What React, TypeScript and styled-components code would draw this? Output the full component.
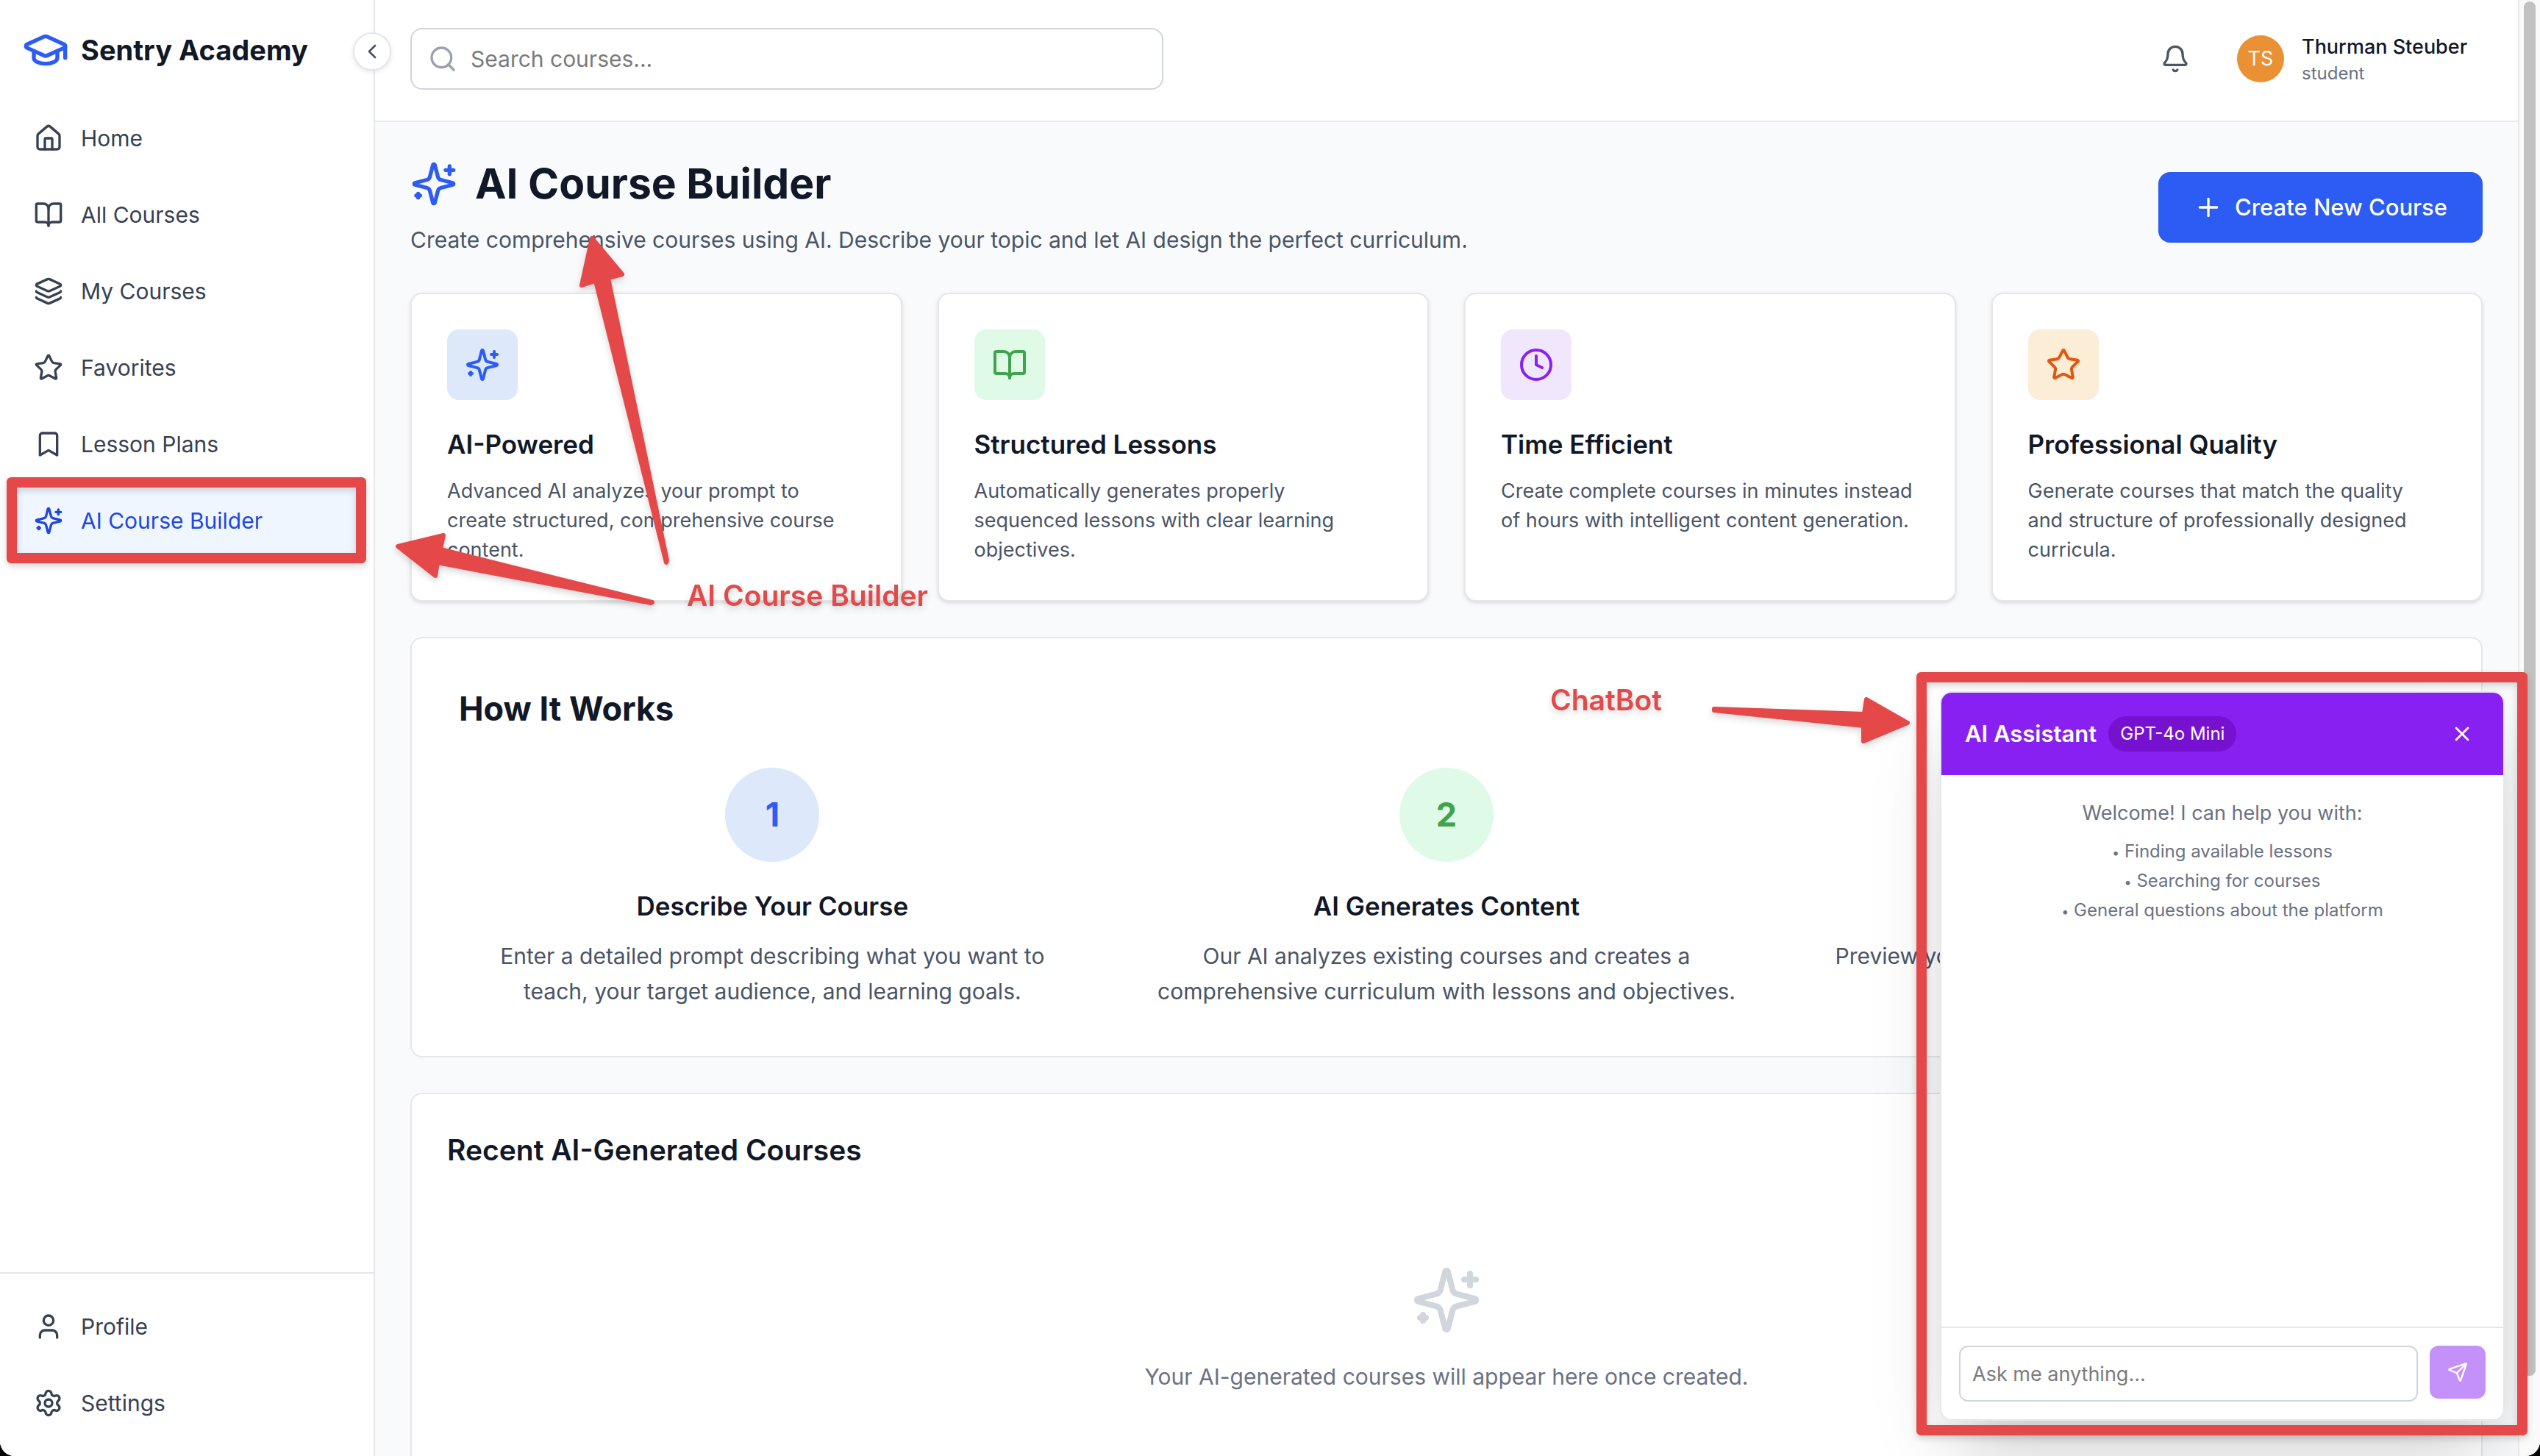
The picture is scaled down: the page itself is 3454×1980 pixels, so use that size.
import React from "react";
import styled, { createGlobalStyle } from "styled-components";
import {
  Bell,
  BookOpen,
  Bookmark,
  ChevronLeft,
  Clock,
  GraduationCap,
  House,
  Layers,
  Plus,
  Search,
  Send,
  Settings,
  Star,
  User,
  X,
} from "lucide-react";

const c = {
  ink: "#111827",
  nav: "#364153",
  text: "#4a5565",
  muted: "#6a7282",
  faint: "#99a1af",
  line: "#e5e7eb",
  field: "#d1d5dc",
  canvas: "#f9fafc",
  blue: "#2c5cf4",
  blueInk: "#2147e0",
  blueSoft: "#dde8fb",
  green: "#3fa44c",
  greenSoft: "#e0fae8",
  purple: "#8920f2",
  purpleInk: "#7511cf",
  purpleSoft: "#f1e7fd",
  orange: "#e3560e",
  orangeSoft: "#fcedd6",
  mark: "#e54849",
};

const GlobalStyle = createGlobalStyle`
  *, *::before, *::after { box-sizing: border-box; }
  body {
    margin: 0;
    background: #000;
    color: ${c.ink};
    font-family: Inter, "Liberation Sans", sans-serif;
    font-size: 30px;
    line-height: 48px;
  }
  h1, h2, h3, p, ul { margin: 0; padding: 0; }
  ul { list-style: none; }
  a { color: inherit; text-decoration: none; }
  button, input { font: inherit; color: inherit; border: 0; margin: 0; }
  button { cursor: pointer; }
  svg { flex: none; display: block; }
`;

/* ---------- shell ---------- */

const Shell = styled.div`
  position: relative;
  display: flex;
  height: 100vh;
  overflow: hidden;
  background: ${c.canvas};
  border-radius: 0 0 20px 20px;
`;

const Sidebar = styled.aside`
  position: relative;
  z-index: 2;
  flex: none;
  display: flex;
  flex-direction: column;
  width: 510px;
  background: #fff;
  border-right: 2px solid ${c.line};
`;

const Brand = styled.a`
  display: flex;
  align-items: center;
  gap: 16px;
  padding: 36px 30px 24px;
  font-size: 38px;
  font-weight: 700;
  line-height: 64px;
  svg { color: ${c.blue}; }
`;

const CollapseButton = styled.button`
  position: absolute;
  top: 44px;
  right: -24px;
  display: flex;
  padding: 8px;
  color: ${c.text};
  background: #fff;
  border: 2px solid ${c.line};
  border-radius: 50%;
  box-shadow: 0 2px 6px rgba(0, 0, 0, 0.1);
`;

const NavList = styled.nav<{ $footer?: boolean }>`
  display: flex;
  flex-direction: column;
  gap: 8px;
  padding: ${(p) => (p.$footer ? "24px 16px 24px 14px" : "16px 16px 16px 14px")};
  ${(p) => (p.$footer ? `margin-top: auto; border-top: 2px solid ${c.line};` : "")}
`;

const NavLink = styled.a<{ $active?: boolean }>`
  display: flex;
  align-items: center;
  gap: 24px;
  padding: 24px 32px;
  border-radius: 16px;
  color: ${(p) => (p.$active ? c.blueInk : c.nav)};
  background: ${(p) => (p.$active ? "#eff6ff" : "transparent")};
`;

const Main = styled.main`
  flex: 1;
  min-width: 0;
`;

const TopBar = styled.header`
  display: flex;
  align-items: center;
  justify-content: space-between;
  padding: 38px 64px 42px 48px;
  background: #fff;
  border-bottom: 2px solid ${c.line};
`;

const SearchBox = styled.label`
  display: flex;
  align-items: center;
  gap: 18px;
  width: 1024px;
  height: 84px;
  padding: 0 22px;
  border: 2px solid ${c.field};
  border-radius: 16px;
  color: ${c.faint};
`;

const TextInput = styled.input`
  flex: 1;
  min-width: 0;
  padding: 0;
  color: ${c.ink};
  background: transparent;
  outline: none;
  &::placeholder { color: #7b7b7b; opacity: 1; }
`;

const Account = styled.div`
  display: flex;
  align-items: center;
  gap: 48px;
`;

const IconButton = styled.button<{ $pad: number }>`
  display: flex;
  padding: ${(p) => p.$pad}px;
  color: inherit;
  background: transparent;
`;

const BellButton = styled(IconButton)`
  color: ${c.text};
`;

const UserButton = styled.button`
  display: flex;
  align-items: center;
  gap: 24px;
  padding: 0;
  text-align: left;
  background: transparent;
`;

const Avatar = styled.span`
  display: flex;
  align-items: center;
  justify-content: center;
  width: 64px;
  height: 64px;
  border-radius: 50%;
  background: #ea9134;
  color: #fff;
  font-size: 27px;
`;

const UserText = styled.span`
  display: flex;
  flex-direction: column;
  min-width: 230px;
`;

const UserName = styled.span`
  font-size: 27px;
  font-weight: 500;
  line-height: 40px;
`;

const UserRole = styled.span`
  font-size: 24px;
  line-height: 32px;
  color: ${c.muted};
`;

const Content = styled.div`
  display: flex;
  flex-direction: column;
  gap: 48px;
  padding: 48px;
`;

/* ---------- page heading ---------- */

const Heading = styled.section`
  display: flex;
  align-items: center;
  justify-content: space-between;
`;

const PageTitle = styled.h1`
  display: flex;
  align-items: center;
  gap: 24px;
  margin-bottom: 16px;
  font-size: 57px;
  font-weight: 700;
  line-height: 72px;
  svg { color: ${c.blue}; }
`;

const Subtitle = styled.p`
  color: ${c.text};
`;

const PrimaryButton = styled.button`
  display: flex;
  align-items: center;
  gap: 16px;
  padding: 24px 48px;
  border-radius: 16px;
  background: ${c.blue};
  color: #fff;
  font-size: 31px;
  font-weight: 500;
`;

/* ---------- feature cards ---------- */

const CardGrid = styled.section`
  display: grid;
  grid-template-columns: repeat(4, minmax(0, 1fr));
  gap: 48px;
`;

const Panel = styled.section<{ $pad: number }>`
  padding: ${(p) => p.$pad}px;
  background: #fff;
  border: 2px solid ${c.line};
  border-radius: 16px;
`;

const Card = styled.article`
  padding: 48px;
  background: #fff;
  border: 2px solid ${c.line};
  border-radius: 16px;
  box-shadow: 0 2px 6px rgba(0, 0, 0, 0.1), 0 2px 4px -2px rgba(0, 0, 0, 0.1);
`;

const IconTile = styled.div<{ $fg: string; $bg: string }>`
  display: flex;
  align-items: center;
  justify-content: center;
  width: 96px;
  height: 96px;
  margin-bottom: 32px;
  border-radius: 16px;
  color: ${(p) => p.$fg};
  background: ${(p) => p.$bg};
`;

const CardTitle = styled.h3`
  margin-bottom: 16px;
  font-size: 35px;
  font-weight: 600;
  line-height: 56px;
`;

const CardText = styled.p`
  font-size: 27px;
  line-height: 40px;
  color: ${c.text};
  white-space: pre-line;
`;

/* ---------- steps ---------- */

const PanelTitle = styled.h2`
  margin-bottom: 48px;
  font-size: 45px;
  font-weight: 700;
  line-height: 64px;
`;

const StepGrid = styled.div`
  display: grid;
  grid-template-columns: repeat(3, minmax(0, 1fr));
  gap: 64px;
`;

const Step = styled.div`
  display: flex;
  flex-direction: column;
  align-items: center;
  text-align: center;
`;

const StepNumber = styled.div<{ $fg: string; $bg: string }>`
  display: flex;
  align-items: center;
  justify-content: center;
  width: 128px;
  height: 128px;
  margin-bottom: 32px;
  border-radius: 50%;
  font-size: 45px;
  font-weight: 700;
  color: ${(p) => p.$fg};
  background: ${(p) => p.$bg};
`;

const StepTitle = styled.h3`
  margin-bottom: 16px;
  font-size: 35px;
  font-weight: 600;
  line-height: 56px;
`;

const StepText = styled.p`
  padding: 0 16px;
  color: ${c.text};
`;

/* ---------- recent courses ---------- */

const RecentTitle = styled.h2`
  margin-bottom: 32px;
  font-size: 39px;
  font-weight: 600;
  line-height: 56px;
`;

const EmptyState = styled.div`
  display: flex;
  flex-direction: column;
  align-items: center;
  gap: 32px;
  padding: 96px 0;
  color: ${c.muted};
  svg { color: ${c.field}; }
`;

/* ---------- assistant ---------- */

const Chat = styled.aside`
  position: absolute;
  right: 48px;
  bottom: 48px;
  z-index: 3;
  display: flex;
  flex-direction: column;
  width: 768px;
  height: 992px;
  overflow: hidden;
  background: #fff;
  border: 2px solid ${c.line};
  border-radius: 16px;
  box-shadow: 0 50px 100px -24px rgba(0, 0, 0, 0.25);
`;

const ChatHeader = styled.header`
  display: flex;
  align-items: center;
  gap: 16px;
  padding: 32px;
  background: ${c.purple};
  color: #fff;
`;

const ChatTitle = styled.h2`
  font-size: 31px;
  font-weight: 600;
`;

const ModelPill = styled.span`
  padding: 8px 16px;
  border-radius: 24px;
  background: ${c.purpleInk};
  font-size: 24px;
  line-height: 32px;
`;

const CloseButton = styled(IconButton)`
  margin-left: auto;
`;

const ChatBody = styled.div`
  flex: 1;
  padding: 32px;
  text-align: center;
  color: ${c.muted};
  font-size: 27px;
  line-height: 40px;
`;

const HintList = styled.ul`
  display: flex;
  flex-direction: column;
  gap: 8px;
  margin-top: 16px;
  font-size: 24px;
  line-height: 32px;
`;

const Bullet = styled.span`
  font-size: 18px;
  line-height: 1;
`;

const ChatForm = styled.form`
  display: flex;
  align-items: flex-start;
  gap: 16px;
  padding: 24px;
  border-top: 2px solid ${c.line};
`;

const ChatInput = styled(TextInput)`
  height: 76px;
  padding: 0 16px;
  font-size: 27px;
  border: 2px solid ${c.field};
  border-radius: 12px;
`;

const SendButton = styled.button`
  display: flex;
  padding: 22px 24px;
  border-radius: 12px;
  background: #c490f9;
  color: #fff;
`;

/* ---------- scrollbar ---------- */

const ScrollTrack = styled.div`
  position: relative;
  z-index: 4;
  flex: none;
  width: 30px;
  padding: 2px 6px;
  background: #fafafa;
  border-left: 2px solid #e8e8e8;
`;

const ScrollThumb = styled.div`
  width: 16px;
  height: 1869px;
  border-radius: 8px;
  background: #c1c1c1;
`;

/* ---------- annotations ---------- */

const Marks = styled.div`
  position: absolute;
  inset: 0;
  z-index: 5;
  pointer-events: none;
  filter: drop-shadow(0 4px 5px rgba(0, 0, 0, 0.16));
`;

const NavFrame = styled.div`
  position: absolute;
  left: 9px;
  top: 649px;
  width: 489px;
  height: 117px;
  border: 14px solid ${c.mark};
  border-radius: 6px;
`;

const ChatFrame = styled.div`
  position: absolute;
  right: 17px;
  bottom: 28px;
  width: 831px;
  height: 1038px;
  border: 14px solid ${c.mark};
  border-radius: 6px;
`;

const NavLabel = styled.p`
  position: absolute;
  left: 934px;
  top: 786px;
  color: ${c.mark};
  font-size: 39px;
  font-weight: 600;
`;

const ChatLabel = styled(NavLabel)`
  left: auto;
  right: 1194px;
  top: 928px;
`;

const Arrow = styled.svg`
  position: absolute;
  fill: ${c.mark};
  stroke: ${c.mark};
  stroke-width: 6;
  stroke-linejoin: round;
`;

const NavArrows = styled(Arrow)`
  left: 520px;
  top: 300px;
`;

const ChatArrow = styled(Arrow)`
  right: 844px;
  top: 930px;
`;

const Sparkles = ({ size }: { size: number }) => (
  <svg
    width={size}
    height={size}
    viewBox="0 0 24 24"
    fill="none"
    stroke="currentColor"
    strokeWidth="2"
    strokeLinecap="round"
    strokeLinejoin="round"
    aria-hidden="true"
  >
    <path d="M9.937 15.5A2 2 0 0 0 8.5 14.063l-6.135-1.582a.5.5 0 0 1 0-.962L8.5 9.936A2 2 0 0 0 9.937 8.5l1.582-6.135a.5.5 0 0 1 .963 0L14.063 8.5A2 2 0 0 0 15.5 9.937l6.135 1.581a.5.5 0 0 1 0 .964L15.5 14.063a2 2 0 0 0-1.437 1.437l-1.582 6.135a.5.5 0 0 1-.963 0z" />
    <path d="M20 3v4" />
    <path d="M22 5h-4" />
    <path d="M4 17v2" />
    <path d="M5 18H3" />
  </svg>
);

type IconType = React.ComponentType<{ size: number }>;

const mainNav: { label: string; icon: IconType; active?: boolean }[] = [
  { label: "Home", icon: House },
  { label: "All Courses", icon: BookOpen },
  { label: "My Courses", icon: Layers },
  { label: "Favorites", icon: Star },
  { label: "Lesson Plans", icon: Bookmark },
  { label: "AI Course Builder", icon: Sparkles, active: true },
];

const footerNav: { label: string; icon: IconType }[] = [
  { label: "Profile", icon: User },
  { label: "Settings", icon: Settings },
];

const features: { title: string; text: string; icon: IconType; fg: string; bg: string }[] = [
  {
    title: "AI-Powered",
    text: "Advanced AI analyzes your prompt to\ncreate structured, comprehensive course content.",
    icon: Sparkles,
    fg: c.blue,
    bg: c.blueSoft,
  },
  {
    title: "Structured Lessons",
    text: "Automatically generates properly sequenced lessons with clear learning objectives.",
    icon: BookOpen,
    fg: c.green,
    bg: c.greenSoft,
  },
  {
    title: "Time Efficient",
    text: "Create complete courses in minutes instead of hours with intelligent content generation.",
    icon: Clock,
    fg: c.purple,
    bg: c.purpleSoft,
  },
  {
    title: "Professional Quality",
    text: "Generate courses that match the quality\nand structure of professionally designed curricula.",
    icon: Star,
    fg: c.orange,
    bg: c.orangeSoft,
  },
];

const steps = [
  {
    title: "Describe Your Course",
    text: "Enter a detailed prompt describing what you want to teach, your target audience, and learning goals.",
    fg: c.blue,
    bg: c.blueSoft,
  },
  {
    title: "AI Generates Content",
    text: "Our AI analyzes existing courses and creates a comprehensive curriculum with lessons and objectives.",
    fg: c.green,
    bg: c.greenSoft,
  },
  {
    title: "Review & Publish",
    text: "Preview your generated course, make corrections, and publish it to the platform.",
    fg: c.purple,
    bg: c.purpleSoft,
  },
];

const hints = ["Finding available lessons", "Searching for courses", "General questions about the platform"];

export default function App() {
  return (
    <>
      <GlobalStyle />
      <Shell>
        <Sidebar>
          <Brand href="#">
            <GraduationCap size={64} />
            Sentry Academy
          </Brand>
          <CollapseButton aria-label="Collapse sidebar">
            <ChevronLeft size={32} />
          </CollapseButton>
          <NavList aria-label="Main">
            {mainNav.map(({ label, icon: Icon, active }) => (
              <NavLink key={label} href="#" $active={active} aria-current={active ? "page" : undefined}>
                <Icon size={40} />
                {label}
              </NavLink>
            ))}
          </NavList>
          <NavList aria-label="Account" $footer>
            {footerNav.map(({ label, icon: Icon }) => (
              <NavLink key={label} href="#">
                <Icon size={40} />
                {label}
              </NavLink>
            ))}
          </NavList>
        </Sidebar>

        <Main>
          <TopBar>
            <SearchBox>
              <Search size={40} />
              <TextInput type="text" placeholder="Search courses..." aria-label="Search courses" />
            </SearchBox>
            <Account>
              <BellButton $pad={16} aria-label="Notifications">
                <Bell size={40} />
              </BellButton>
              <UserButton>
                <Avatar>TS</Avatar>
                <UserText>
                  <UserName>Thurman Steuber</UserName>
                  <UserRole>student</UserRole>
                </UserText>
              </UserButton>
            </Account>
          </TopBar>

          <Content>
            <Heading>
              <div>
                <PageTitle>
                  <Sparkles size={64} />
                  AI Course Builder
                </PageTitle>
                <Subtitle>
                  Create comprehensive courses using AI. Describe your topic and let AI design the perfect
                  curriculum.
                </Subtitle>
              </div>
              <PrimaryButton>
                <Plus size={40} />
                Create New Course
              </PrimaryButton>
            </Heading>

            <CardGrid>
              {features.map(({ title, text, icon: Icon, fg, bg }) => (
                <Card key={title}>
                  <IconTile $fg={fg} $bg={bg}>
                    <Icon size={48} />
                  </IconTile>
                  <CardTitle>{title}</CardTitle>
                  <CardText>{text}</CardText>
                </Card>
              ))}
            </CardGrid>

            <Panel $pad={64}>
              <PanelTitle>How It Works</PanelTitle>
              <StepGrid>
                {steps.map(({ title, text, fg, bg }, i) => (
                  <Step key={title}>
                    <StepNumber $fg={fg} $bg={bg}>
                      {i + 1}
                    </StepNumber>
                    <StepTitle>{title}</StepTitle>
                    <StepText>{text}</StepText>
                  </Step>
                ))}
              </StepGrid>
            </Panel>

            <Panel $pad={48}>
              <RecentTitle>Recent AI-Generated Courses</RecentTitle>
              <EmptyState>
                <Sparkles size={96} />
                <p>Your AI-generated courses will appear here once created.</p>
              </EmptyState>
            </Panel>
          </Content>
        </Main>

        <ScrollTrack>
          <ScrollThumb />
        </ScrollTrack>

        <Chat aria-label="AI Assistant">
          <ChatHeader>
            <ChatTitle>AI Assistant</ChatTitle>
            <ModelPill>GPT-4o Mini</ModelPill>
            <CloseButton $pad={8} aria-label="Close assistant">
              <X size={32} />
            </CloseButton>
          </ChatHeader>
          <ChatBody>
            <p>Welcome! I can help you with:</p>
            <HintList>
              {hints.map((hint) => (
                <li key={hint}>
                  <Bullet>•</Bullet> {hint}
                </li>
              ))}
            </HintList>
          </ChatBody>
          <ChatForm>
            <ChatInput type="text" placeholder="Ask me anything..." aria-label="Message" />
            <SendButton type="button" aria-label="Send">
              <Send size={28} />
            </SendButton>
          </ChatForm>
        </Chat>

        <Marks>
          <NavFrame />
          <ChatFrame />
          <NavLabel>AI Course Builder</NavLabel>
          <ChatLabel>ChatBot</ChatLabel>
          <NavArrows width="400" height="540" viewBox="520 300 400 540" aria-hidden="true">
            <path d="M805 324 L846 373 L827 378 L907 762 L906 765 L810 382 L791 388 Z" />
            <path d="M541 743 L603 728 L599 747 L887 819 L885 820 L595 765 L592 783 Z" />
          </NavArrows>
          <ChatArrow width="290" height="100" viewBox="2320 930 290 100" aria-hidden="true">
            <path d="M2331 964 L2535 971 L2538 951 L2594 983 L2534 1008 L2534 987 L2331 966 Z" />
          </ChatArrow>
        </Marks>
      </Shell>
    </>
  );
}
